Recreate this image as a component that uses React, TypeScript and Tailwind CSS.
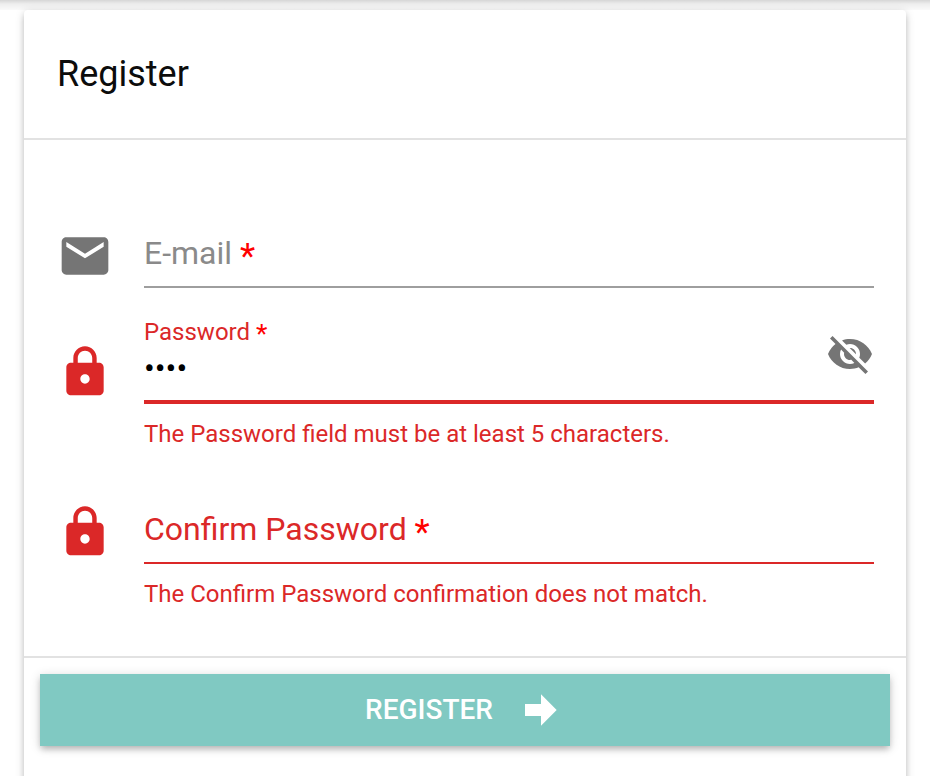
import React, { useState } from 'react';
import { MdEmail, MdLock, MdVisibility, MdVisibilityOff } from 'react-icons/md';

const Required = () => (
  <>
    {' '}
    <span className="align-[-0.1em] text-[1.1em] leading-none text-[#ff0000]">*</span>
  </>
);

const ArrowRightBold = () => (
  <svg className="size-12" viewBox="0 0 24 24" fill="currentColor" aria-hidden="true">
    <path d="M4,15V9H12V4.16L19.84,12L12,19.84V15H4Z" />
  </svg>
);

const App: React.FC = () => {
  const [email, setEmail] = useState('');
  const [password, setPassword] = useState('1234');
  const [confirm, setConfirm] = useState('');
  const [showPassword, setShowPassword] = useState(false);

  return (
    <div className="min-h-screen bg-white font-['Roboto',sans-serif]">
      {/* Soft shadow under the toolbar */}
      <header className="h-[10px] bg-linear-to-b from-[#d6d6d6] via-[#eeeeee] via-40% to-[#fafafa]" />

      <main className="px-6">
        <form
          onSubmit={(e) => e.preventDefault()}
          className="min-h-screen rounded-sm bg-white shadow-[0_4px_6px_-1px_rgba(0,0,0,0.2),0_2px_10px_rgba(0,0,0,0.16)]"
        >
          <div className="border-b-2 border-[#e2e2e2] py-10 pr-8 pl-[33px]">
            <h1 className="text-4xl leading-12 text-[#0c0c0c]">Register</h1>
          </div>

          <div className="border-b-2 border-[#e2e2e2] pt-[82px] pr-8 pb-12 pl-[33px]">
            {/* E-mail */}
            <div className="flex items-start gap-[31px]">
              <MdEmail className="mt-1.5 size-14 shrink-0 text-[#757575]" />
              <div className="flex flex-1 border-b-2 border-[#9e9e9e] pt-[11px] pb-[13px]">
                <label htmlFor="email" className="h-10 text-[32px] leading-10 text-[#8a8a8a]">
                  E-mail
                  <Required />
                </label>
                <input
                  id="email"
                  type="email"
                  required
                  value={email}
                  onChange={(e) => setEmail(e.target.value)}
                  className="h-10 min-w-0 flex-1 bg-transparent pl-3 text-[32px] outline-none"
                />
              </div>
            </div>

            {/* Password */}
            <div className="mt-[30px] flex items-start gap-[31px] text-[#db2828]">
              <MdLock className="mt-[26px] size-14 shrink-0" />
              <div className="flex-1">
                <div className="flex items-start border-b-4 border-[#db2828] pb-3">
                  <div className="flex min-w-0 flex-1 flex-col">
                    <label htmlFor="password" className="h-7 text-2xl leading-7">
                      Password
                      <Required />
                    </label>
                    <input
                      id="password"
                      type={showPassword ? 'text' : 'password'}
                      required
                      value={password}
                      onChange={(e) => setPassword(e.target.value)}
                      className="mt-0.5 h-10 w-full bg-transparent text-[32px] text-black outline-none"
                    />
                  </div>
                  <button
                    type="button"
                    aria-label="Toggle password visibility"
                    onClick={() => setShowPassword(!showPassword)}
                    className="mt-3 text-[#757575]"
                  >
                    {showPassword ? <MdVisibility className="size-12" /> : <MdVisibilityOff className="size-12" />}
                  </button>
                </div>
                <p className="mt-4 text-2xl leading-7">The Password field must be at least 5 characters.</p>
              </div>
            </div>

            {/* Confirm password */}
            <div className="mt-[50px] flex items-start gap-[31px] text-[#db2828]">
              <MdLock className="mt-1.5 size-14 shrink-0" />
              <div className="flex-1">
                <div className="flex border-b-2 border-[#db2828] pt-[11px] pb-[13px]">
                  <label htmlFor="confirm" className="h-10 text-[32px] leading-10">
                    Confirm Password
                    <Required />
                  </label>
                  <input
                    id="confirm"
                    type="password"
                    required
                    value={confirm}
                    onChange={(e) => setConfirm(e.target.value)}
                    className="h-10 min-w-0 flex-1 bg-transparent pl-3 text-[32px] text-black outline-none"
                  />
                </div>
                <p className="mt-4 text-2xl leading-7">The Confirm Password confirmation does not match.</p>
              </div>
            </div>
          </div>

          <div className="p-4">
            <button
              type="submit"
              className="flex h-[72px] w-full items-center justify-center gap-6 bg-[#80c9c2] text-[28px] font-medium text-white uppercase shadow-[0_4px_6px_-1px_rgba(0,0,0,0.2),0_2px_10px_rgba(0,0,0,0.16)]"
            >
              Register
              <ArrowRightBold />
            </button>
          </div>
        </form>
      </main>
    </div>
  );
};

export default App;
